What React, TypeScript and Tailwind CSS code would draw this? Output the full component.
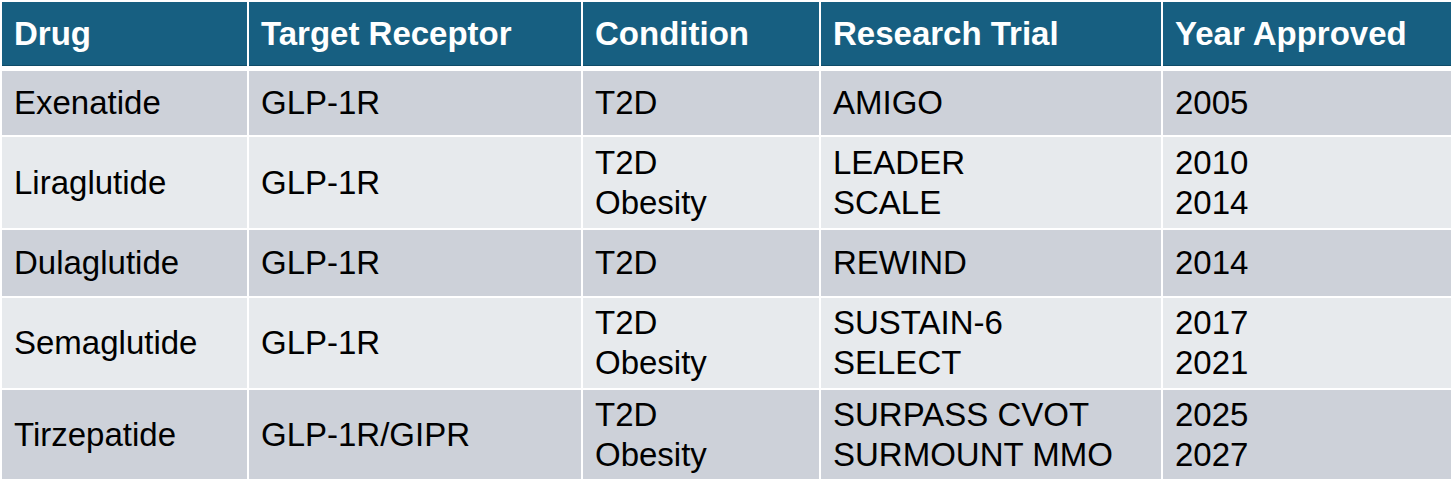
const cols = 'grid grid-cols-[245px_332px_236px_340px_288px] gap-x-[2px]'

type Row = { drug: string; target: string; condition: string[]; trial: string[]; year: string[]; h: string; bg: string }

const rows: Row[] = [
  { drug: 'Exenatide', target: 'GLP-1R', condition: ['T2D'], trial: ['AMIGO'], year: ['2005'], h: 'h-[64px]', bg: 'bg-[#cdd1d9]' },
  { drug: 'Liraglutide', target: 'GLP-1R', condition: ['T2D', 'Obesity'], trial: ['LEADER', 'SCALE'], year: ['2010', '2014'], h: 'h-[91px]', bg: 'bg-[#e7eaed]' },
  { drug: 'Dulaglutide', target: 'GLP-1R', condition: ['T2D'], trial: ['REWIND'], year: ['2014'], h: 'h-[66px]', bg: 'bg-[#cdd1d9]' },
  { drug: 'Semaglutide', target: 'GLP-1R', condition: ['T2D', 'Obesity'], trial: ['SUSTAIN-6', 'SELECT'], year: ['2017', '2021'], h: 'h-[90px]', bg: 'bg-[#e7eaed]' },
  { drug: 'Tirzepatide', target: 'GLP-1R/GIPR', condition: ['T2D', 'Obesity'], trial: ['SURPASS CVOT', 'SURMOUNT MMO'], year: ['2025', '2027'], h: 'h-[89px]', bg: 'bg-[#cdd1d9]' },
]

const headers = ['Drug', 'Target Receptor', 'Condition', 'Research Trial', 'Year Approved']

function Cell({ lines, bg }: { lines: string[]; bg: string }) {
  return (
    <div className={`${bg} flex flex-col justify-center pl-3`}>
      {lines.map((l) => (
        <span key={l} className="leading-[40px]">{l}</span>
      ))}
    </div>
  )
}

export default function App() {
  return (
    <div className="min-h-screen bg-white pl-[2px] pt-[2px] text-[33px] text-black" style={{ fontFamily: "'Liberation Sans', Arial, sans-serif" }}>
      <div className="w-[1449px]">
        <div className={`${cols} h-[64px]`}>
          {headers.map((h) => (
            <div key={h} className="bg-[#175f81] flex items-center pl-3 font-bold text-white border-b border-[#0f4c68]">
              {h}
            </div>
          ))}
        </div>
        <div className="flex flex-col gap-y-[2px] mt-[5px]">
          {rows.map((r) => (
            <div key={r.drug} className={`${cols} ${r.h}`}>
              <Cell lines={[r.drug]} bg={r.bg} />
              <Cell lines={[r.target]} bg={r.bg} />
              <Cell lines={r.condition} bg={r.bg} />
              <Cell lines={r.trial} bg={r.bg} />
              <Cell lines={r.year} bg={r.bg} />
            </div>
          ))}
        </div>
      </div>
    </div>
  )
}
